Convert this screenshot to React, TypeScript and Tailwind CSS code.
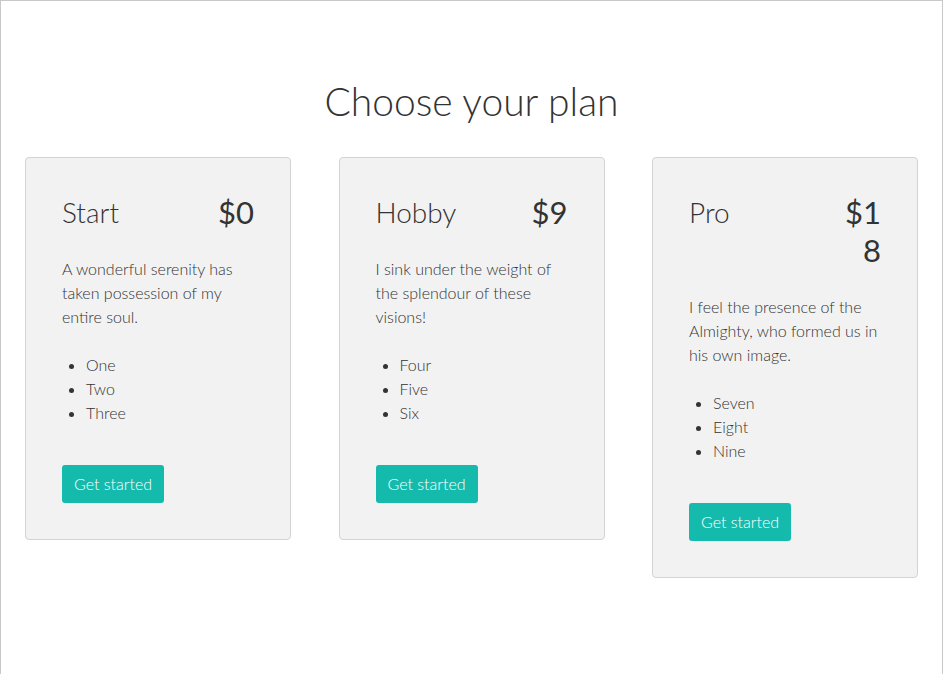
import React from 'react';

interface Plan {
  name: string;
  price: string;
  description: string;
  features: string[];
}

const plans: Plan[] = [
  {
    name: 'Start',
    price: '$0',
    description: 'A wonderful serenity has taken possession of my entire soul.',
    features: ['One', 'Two', 'Three'],
  },
  {
    name: 'Hobby',
    price: '$9',
    description: 'I sink under the weight of the splendour of these visions!',
    features: ['Four', 'Five', 'Six'],
  },
  {
    name: 'Pro',
    price: '$18',
    description: 'I feel the presence of the Almighty, who formed us in his own image.',
    features: ['Seven', 'Eight', 'Nine'],
  },
];

const PlanCard: React.FC<{ plan: Plan }> = ({ plan }) => {
  return (
    <div className="w-[266px] bg-[#f2f2f2] border border-[#d3d3d3] rounded-[4px] px-9 pt-[35px] pb-9">
      <div className="flex items-start justify-between">
        <h2 className="text-[28px] font-light leading-[38px] text-[#333]">{plan.name}</h2>
        <span className="w-[40px] text-right break-all text-[31px] leading-[38px] text-[#333]">
          {plan.price}
        </span>
      </div>
      <p className="mt-[26px] text-[16px] font-light leading-6 text-[#333]">{plan.description}</p>
      <ul className="mt-6 list-disc pl-6 text-[16px] font-light leading-6 text-[#333]">
        {plan.features.map((f) => (
          <li key={f}>{f}</li>
        ))}
      </ul>
      <button className="mt-10 h-[38px] px-[12px] rounded-[3px] bg-[#14bbad] text-white text-[16px] font-light">
        Get started
      </button>
    </div>
  );
};

const App: React.FC = () => {
  return (
    <div
      className="min-h-[700px] border-x border-t border-[#c8c8c8] bg-white"
      style={{ fontFamily: 'Lato, "Open Sans", sans-serif' }}
    >
      <h1 className="pt-[72px] text-center text-[39px] font-light leading-[56px] text-[#333]">
        Choose your plan
      </h1>
      <div className="mt-[28px] flex items-start justify-between pl-6 pr-6">
        {plans.map((p) => (
          <PlanCard key={p.name} plan={p} />
        ))}
      </div>
    </div>
  );
};

export default App;
